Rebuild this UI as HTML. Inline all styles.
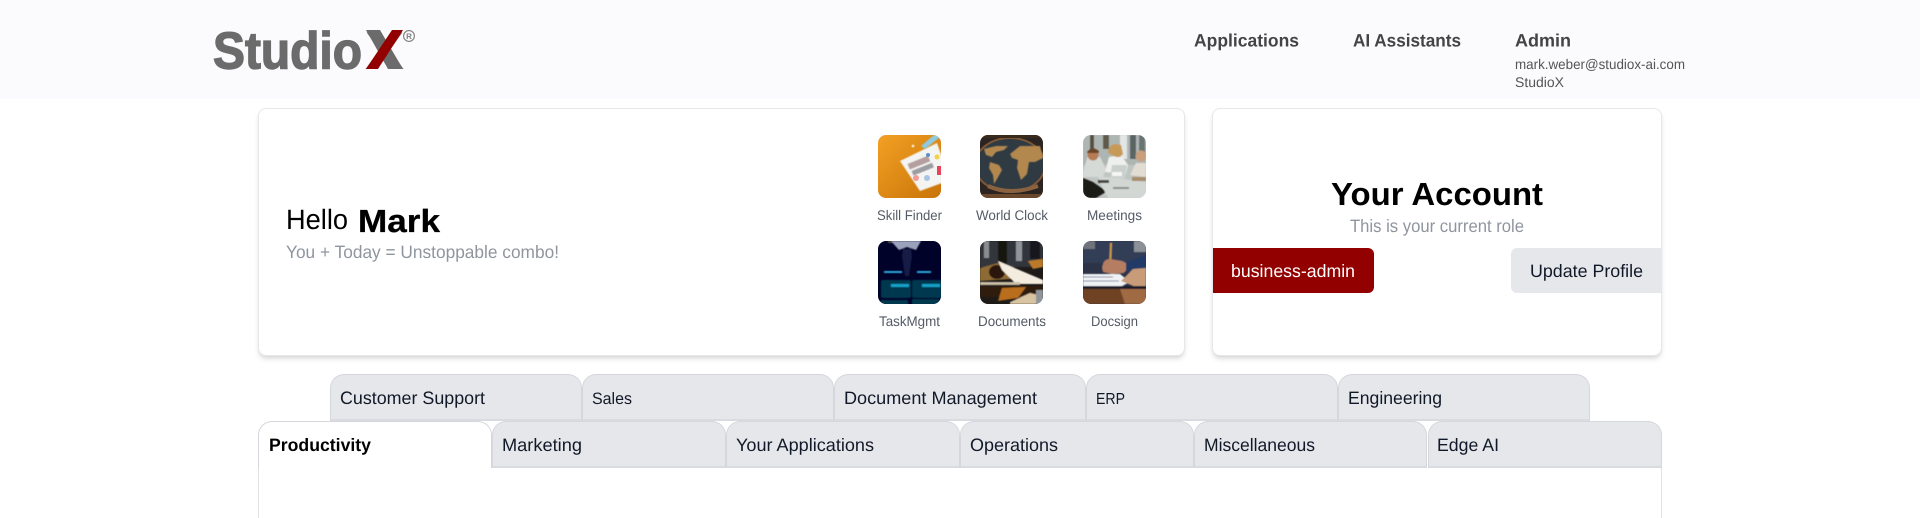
<!DOCTYPE html>
<html><head><meta charset="utf-8"><title>StudioX</title>
<style>
html,body{margin:0;padding:0;width:1920px;height:518px;overflow:hidden;background:#fff}
.b{position:absolute;box-sizing:border-box}
.tab{height:47px;background:#e5e7eb;border:1px solid #d5d7dc;border-bottom:2px solid #d9dbe0;border-radius:14px 14px 0 0;width:252px}
.tab2{width:233.9px}
svg{position:absolute;left:0;top:0}
text{font-family:"Liberation Sans",sans-serif;text-rendering:geometricPrecision}
.card{background:#fff;border:1px solid #e5e7eb;border-radius:8px;box-shadow:0 4px 6px -1px rgba(0,0,0,.12),0 2px 4px -2px rgba(0,0,0,.1)}
</style></head><body>
<div class="b" style="left:0;top:0;width:1920px;height:99px;background:#fbfbfe"></div>
<div class="b card" style="left:258px;top:108px;width:927px;height:248px"></div>
<div class="b card" style="left:1212px;top:108px;width:450px;height:248px"></div>
<div class="b" style="left:1213px;top:248px;width:161px;height:45px;background:#930000;border-radius:0 6px 6px 0"></div>
<div class="b" style="left:1511px;top:248px;width:150px;height:45px;background:#e5e7eb;border-radius:6px 0 0 6px"></div>

<div class="b tab" style="left:330px;top:374px"></div>
<div class="b tab" style="left:582px;top:374px"></div>
<div class="b tab" style="left:834px;top:374px"></div>
<div class="b tab" style="left:1086px;top:374px"></div>
<div class="b tab" style="left:1338px;top:374px"></div>
<div class="b" style="left:258px;top:440px;width:1404px;height:78px;background:#fff;border:1px solid #dfe1e5;border-bottom:0;border-top:0"></div>
<div class="b tab tab2" style="left:491.9px;top:421px"></div>
<div class="b tab tab2" style="left:725.8px;top:421px"></div>
<div class="b tab tab2" style="left:959.7px;top:421px"></div>
<div class="b tab tab2" style="left:1193.6px;top:421px"></div>
<div class="b tab tab2" style="left:1427.5px;top:421px;width:234.5px"></div>
<div class="b" style="left:258px;top:421px;width:234px;height:47px;background:#fff;border:1px solid #d5d7dc;border-bottom:0;border-radius:14px 14px 0 0"></div>

<svg width="1920" height="518" viewBox="0 0 1920 518" xmlns="http://www.w3.org/2000/svg">
<defs>
<filter id="t"><feGaussianBlur stdDeviation=".6"/></filter>
<clipPath id="c1"><rect x="878" y="135" width="63" height="63" rx="8"/></clipPath>
<clipPath id="c2"><rect x="980" y="135" width="63" height="63" rx="8"/></clipPath>
<clipPath id="c3"><rect x="1083" y="135" width="63" height="63" rx="8"/></clipPath>
<clipPath id="c4"><rect x="878" y="241" width="63" height="63" rx="8"/></clipPath>
<clipPath id="c5"><rect x="980" y="241" width="63" height="63" rx="8"/></clipPath>
<clipPath id="c6"><rect x="1083" y="241" width="63" height="63" rx="8"/></clipPath>
<linearGradient id="o" x1="0" y1="0" x2="1" y2="1"><stop offset="0" stop-color="#f3a024"/><stop offset="1" stop-color="#c87408"/></linearGradient>
</defs>

<!-- Logo -->
<text x="213" y="68.5" font-size="52" font-weight="700" fill="#6b6b6b" stroke="#6b6b6b" stroke-width="1.4" textLength="149" lengthAdjust="spacingAndGlyphs">Studio</text>
<text x="365" y="69" font-size="53" font-weight="700" fill="#6b6b6b" textLength="39" lengthAdjust="spacingAndGlyphs">X</text>
<polygon points="366,30 380,30 403,69 388,69" fill="#6b6b6b"/>
<polygon points="392,30 403,30 378,69 366,69" fill="#930000"/>
<circle cx="409" cy="36" r="5.4" fill="none" stroke="#808080" stroke-width="1.1"/>
<text x="409" y="39" font-size="8" font-weight="700" fill="#808080" text-anchor="middle">R</text>

<!-- Nav -->
<text x="1194" y="46.5" font-size="18" font-weight="700" fill="#444" textLength="105" lengthAdjust="spacingAndGlyphs">Applications</text>
<text x="1353" y="46.5" font-size="18" font-weight="700" fill="#444" textLength="108" lengthAdjust="spacingAndGlyphs">AI Assistants</text>
<text x="1515" y="46.5" font-size="18" font-weight="700" fill="#444" textLength="56" lengthAdjust="spacingAndGlyphs">Admin</text>
<text x="1515" y="69" font-size="14" fill="#555" textLength="170" lengthAdjust="spacingAndGlyphs">mark.weber@studiox-ai.com</text>
<text x="1515" y="87" font-size="14" fill="#555" textLength="49" lengthAdjust="spacingAndGlyphs">StudioX</text>

<!-- Hello -->
<text x="286" y="229" font-size="28" fill="#000" textLength="62" lengthAdjust="spacingAndGlyphs">Hello</text>
<text x="358" y="232" font-size="32" font-weight="700" fill="#000" stroke="#000" stroke-width=".3" textLength="82" lengthAdjust="spacingAndGlyphs">Mark</text>
<text x="286" y="258" font-size="18" fill="#8f959e" textLength="273" lengthAdjust="spacingAndGlyphs">You + Today = Unstoppable combo!</text>

<!-- Image 1: Skill Finder -->
<g clip-path="url(#c1)">
<rect x="878" y="135" width="63" height="63" fill="url(#o)"/>
<polygon points="900,161 937,143 950,180 920,191" fill="#f4f4f2" filter="url(#t)"/>
<polygon points="921,146 934,135 940,135 940,137 925,149" fill="#8fcbe0" filter="url(#t)"/>
<rect x="908" y="160" width="22" height="6" fill="#7f5a5a" opacity=".55" transform="rotate(-22 918 163)" filter="url(#t)"/>
<rect x="912" y="167" width="22" height="5" fill="#55555f" opacity=".55" transform="rotate(-22 922 170)" filter="url(#t)"/>
<circle cx="916" cy="178" r="3" fill="#f09a9a"/>
<circle cx="927" cy="178" r="3" fill="#a9c3e4"/>
<circle cx="937" cy="157" r="2.5" fill="#f2d24a"/>
<rect x="937" y="166" width="5" height="9" fill="#e8455a"/>
<circle cx="928" cy="155" r="2" fill="#5d8fd0"/>
<circle cx="913" cy="146" r="1.5" fill="#f4d9a8"/>
</g>

<!-- Image 2: World Clock -->
<g clip-path="url(#c2)">
<rect x="980" y="135" width="63" height="63" fill="#2b2420"/>
<ellipse cx="1010" cy="165" rx="36" ry="28" fill="#2f3a42"/>
<ellipse cx="1010" cy="165" rx="35" ry="27" fill="none" stroke="#7c5636" stroke-width="2"/>
<g filter="url(#t)" fill="#b28850">
<path d="M984 149l12-3 12 0-4 4-8 2-4 5-6-2z"/>
<path d="M990 162l9 3 3 5-5 9-3 5-1-9-4-7z"/>
<path d="M1010 154l10-8 20 0 3 12-8 4-6 0-2 12-6 6-4-12 1-8-6-2z"/>
</g>
<path d="M988 186q22 10 50 0" fill="none" stroke="#8a6240" stroke-width="4"/>
<rect x="980" y="135" width="63" height="3" fill="#3a2a1c"/>
<rect x="980" y="194" width="63" height="4" fill="#6a482c"/>
</g>

<!-- Image 3: Meetings -->
<g clip-path="url(#c3)">
<rect x="1083" y="135" width="63" height="63" fill="#bfc5c3"/>
<g filter="url(#t)">
<rect x="1083" y="135" width="63" height="30" fill="#aeb6b4"/>
<rect x="1090" y="135" width="4" height="22" fill="#55503f"/>
<rect x="1103" y="135" width="6" height="14" fill="#5f5a4c"/>
<rect x="1120" y="135" width="7" height="24" fill="#e3e6e5"/>
<rect x="1130" y="135" width="6" height="24" fill="#5a6563"/>
<rect x="1139" y="135" width="6" height="22" fill="#6a7573"/>
<path d="M1083 172l5-17 12 2 6 12-3 8h-20z" fill="#d5dad7"/>
<circle cx="1093" cy="155" r="5.5" fill="#b67b52"/>
<path d="M1087 152q5-7 12-1v2h-12z" fill="#6b4528"/>
<path d="M1105 172l4-15 12-2 7 10-2 9z" fill="#eef0ee"/>
<circle cx="1115" cy="150" r="5.5" fill="#e2bc96"/>
<path d="M1108 153q1-12 13-8l2 9-3 3h-4z" fill="#c89a58"/>
<path d="M1112 165h15l-2 14h-15z" fill="#c9d0cd"/>
<circle cx="1141" cy="156" r="5.5" fill="#caa07c"/>
<path d="M1130 175l6-12 10 0v14z" fill="#e2dcd2"/>
<path d="M1083 178l10 4 10 7 3 3-10 6h-13z" fill="#1f1b19"/>
<path d="M1098 176l48 6v16h-38l-7-14z" fill="#d3d7d4"/>
<rect x="1098" y="180" width="11" height="3" fill="#454543"/>
<rect x="1112" y="172" width="10" height="4" fill="#f6f6f4"/>
<rect x="1132" y="177" width="14" height="4" fill="#a88e6a"/>
<rect x="1113" y="187" width="16" height="2" fill="#8a8f8c"/>
</g>
</g>

<!-- Image 4: TaskMgmt -->
<g clip-path="url(#c4)">
<rect x="878" y="241" width="63" height="63" fill="#01022a"/>
<g filter="url(#t)">
<rect x="888" y="241" width="32" height="2" fill="#5a4a3c"/>
<path d="M891 241l8 9 8-3 9 3 5-9z" fill="#9aa1bb"/>
<path d="M903 249h8l1 7-3 20h-4l-3-20z" fill="#141f44"/>
<rect x="884" y="271" width="18" height="2" fill="#2aa6d8"/>
<rect x="917" y="271" width="14" height="2" fill="#2aa6d8"/>
<rect x="881" y="280" width="30" height="18" rx="2" fill="#05374f"/>
<rect x="912" y="280" width="30" height="18" rx="2" fill="#05374f"/>
<rect x="891" y="284" width="18" height="3" fill="#15a0c8"/>
<rect x="922" y="284" width="18" height="3" fill="#15a0c8"/>
<rect x="881" y="300" width="27" height="5" fill="#05374f"/>
<rect x="912" y="299" width="27" height="6" fill="#05374f"/>
</g>
</g>

<!-- Image 5: Documents -->
<g clip-path="url(#c5)">
<rect x="980" y="241" width="63" height="63" fill="#1d1a18"/>
<g filter="url(#t)">
<rect x="980" y="241" width="63" height="26" fill="#33353a"/>
<rect x="984" y="241" width="5" height="17" fill="#8a8d90"/>
<rect x="1016" y="241" width="6" height="20" fill="#8f959a"/>
<rect x="998" y="241" width="9" height="24" fill="#16120f"/>
<rect x="1030" y="241" width="10" height="18" fill="#16161c"/>
<path d="M980 268l18-5 18 6-5 10-31 2z" fill="#8e6a36"/>
<ellipse cx="997" cy="272" rx="8" ry="7" fill="#2a170e"/>
<path d="M998 261l45 19v4h-27l-14-14z" fill="#f3ecdf"/>
<path d="M1028 261l15-2v8l-10 2z" fill="#b97a2a"/>
<path d="M980 282h40v3h-40z" fill="#cbbfa8"/>
<path d="M980 286h63v11h-63z" fill="#2e1c10"/>
<path d="M1002 288l24-1-8 11-20 3z" fill="#b86e1a"/>
<path d="M1010 302l20-9 13 3v8h-33z" fill="#d9c4a2"/>
<rect x="1036" y="290" width="7" height="14" fill="#8f959a"/>
</g>
</g>

<!-- Image 6: Docsign -->
<g clip-path="url(#c6)">
<rect x="1083" y="241" width="63" height="63" fill="#2c3346"/>
<g filter="url(#t)">
<rect x="1083" y="241" width="63" height="22" fill="#323c56"/>
<rect x="1134" y="241" width="12" height="11" fill="#8c9097"/>
<rect x="1083" y="241" width="12" height="8" fill="#70757d"/>
<path d="M1110 243l2 0-1 27-2 0z" fill="#c89a4c"/>
<path d="M1102 268q1-9 8-9l12 2 8 4-6 8-12 1-9-2z" fill="#b57e63"/>
<path d="M1126 262l20-7v14l-20 3z" fill="#243a66"/>
<path d="M1083 274h37l10 8-8 4h-39z" fill="#f0f3f6"/>
<path d="M1083 277h30M1083 281h36" stroke="#7a88a0" stroke-width="1"/>
<path d="M1121 281l12-12 13-1v19l-10 0z" fill="#c99c79"/>
<path d="M1083 286h63v3h-63z" fill="#1a1e2a"/>
<rect x="1083" y="289" width="63" height="15" fill="#6e4224"/>
<path d="M1120 289l26 0v15h-21z" fill="#a06a42"/>
</g>
</g>

<!-- Icon labels -->
<g font-size="14" fill="#555b66">
<text x="877" y="220" textLength="65" lengthAdjust="spacingAndGlyphs">Skill Finder</text>
<text x="976" y="220" textLength="72" lengthAdjust="spacingAndGlyphs">World Clock</text>
<text x="1087" y="220" textLength="55" lengthAdjust="spacingAndGlyphs">Meetings</text>
<text x="879" y="326" textLength="61" lengthAdjust="spacingAndGlyphs">TaskMgmt</text>
<text x="978" y="326" textLength="68" lengthAdjust="spacingAndGlyphs">Documents</text>
<text x="1091" y="326" textLength="47" lengthAdjust="spacingAndGlyphs">Docsign</text>
</g>

<!-- Account -->
<text x="1331" y="205" font-size="32" font-weight="700" fill="#000" textLength="212" lengthAdjust="spacingAndGlyphs">Your Account</text>
<text x="1350" y="232" font-size="18" fill="#8f959e" textLength="174" lengthAdjust="spacingAndGlyphs">This is your current role</text>
<text x="1231" y="277" font-size="18" fill="#fff" textLength="124" lengthAdjust="spacingAndGlyphs">business-admin</text>
<text x="1530" y="277" font-size="18" fill="#111827" textLength="113" lengthAdjust="spacingAndGlyphs">Update Profile</text>

<!-- Tabs -->
<g font-size="18" fill="#111827">
<text x="340" y="404" textLength="145" lengthAdjust="spacingAndGlyphs">Customer Support</text>
<text x="592" y="404" font-size="16.5" textLength="40" lengthAdjust="spacingAndGlyphs">Sales</text>
<text x="844" y="404" textLength="193" lengthAdjust="spacingAndGlyphs">Document Management</text>
<text x="1096" y="404" font-size="16" textLength="29" lengthAdjust="spacingAndGlyphs">ERP</text>
<text x="1348" y="404" textLength="94" lengthAdjust="spacingAndGlyphs">Engineering</text>
<text x="269" y="451" font-weight="700" fill="#000" textLength="102" lengthAdjust="spacingAndGlyphs">Productivity</text>
<text x="502" y="451" textLength="80" lengthAdjust="spacingAndGlyphs">Marketing</text>
<text x="736" y="451" textLength="138" lengthAdjust="spacingAndGlyphs">Your Applications</text>
<text x="970" y="451" textLength="88" lengthAdjust="spacingAndGlyphs">Operations</text>
<text x="1204" y="451" textLength="111" lengthAdjust="spacingAndGlyphs">Miscellaneous</text>
<text x="1437" y="451" textLength="62" lengthAdjust="spacingAndGlyphs">Edge AI</text>
</g>
</svg>
</body></html>
